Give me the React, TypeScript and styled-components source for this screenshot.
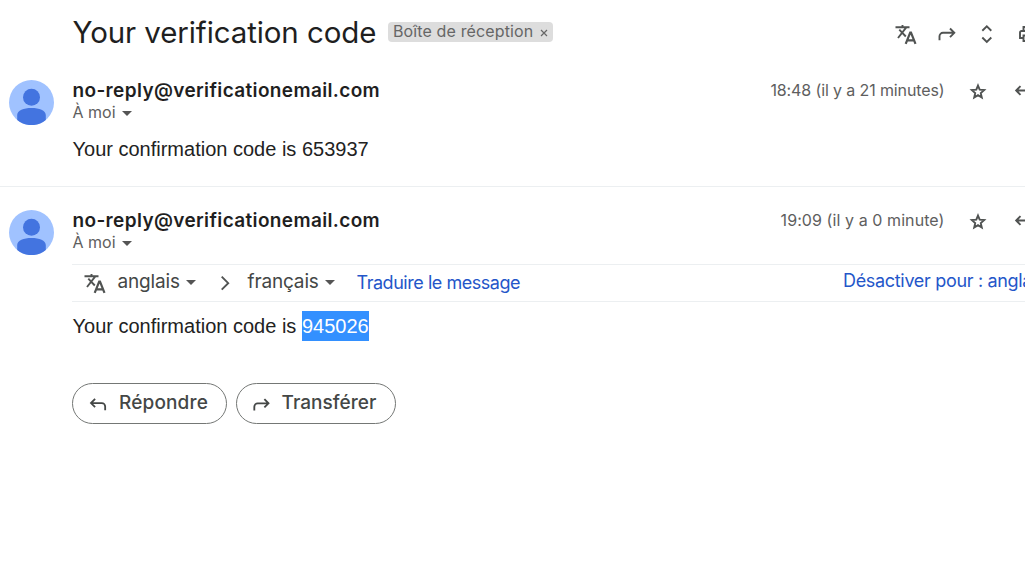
import React from "react";
import styled, { createGlobalStyle } from "styled-components";

const GlobalStyle = createGlobalStyle`
  * { box-sizing: border-box; }
  body { margin: 0; background: #fff; overflow: hidden; }
`;

const brand = `"Google Sans", Inter, Roboto, sans-serif`;

const Page = styled.main`
  width: 1025px;
  height: 568px;
  overflow: hidden;
  background: #fff;
  color: #1f1f1f;
  font-family: ${brand};
  white-space: nowrap;
`;

const Header = styled.header`
  display: flex;
  height: 80px;
  padding-left: 72.5px;
`;

const Subject = styled.h1`
  flex: none;
  width: 315.5px;
  margin: 12px 0 0;
  font-size: 29.5px;
  line-height: 40px;
  font-weight: 400;
  letter-spacing: -0.1px;
`;

const Chip = styled.span`
  display: flex;
  flex: none;
  width: 165px;
  height: 20px;
  margin-top: 22px;
  padding: 0 5px;
  border-radius: 4px;
  background: #ddd;
  color: #666;
  font-size: 16px;
  line-height: 19px;
  letter-spacing: 0.13px;
  justify-content: space-between;
`;

const ChipClose = styled.svg`
  width: 8px;
  height: 8px;
  margin-top: 7px;
`;

const Toolbar = styled.div`
  display: flex;
  flex: none;
  margin: 22px 0 0 341px;
  color: #505352;
`;

const ToolSlot = styled.span<{ $width: number }>`
  flex: none;
  width: ${(p) => p.$width}px;
`;

const IconBox = styled.svg<{ $size?: number }>`
  display: block;
  flex: none;
  width: ${(p) => p.$size ?? 24}px;
  height: ${(p) => p.$size ?? 24}px;
  fill: none;
  stroke: currentColor;
  stroke-width: 1.9;
`;

const Message = styled.article<{ $divided?: boolean }>`
  display: flex;
  height: ${(p) => (p.$divided ? "107px" : "300px")};
  border-bottom: ${(p) => (p.$divided ? "1px solid #eceff1" : "0")};
  padding-left: 9px;
  margin-bottom: 23px;
`;

const Avatar = styled.svg`
  display: block;
  flex: none;
  width: 45px;
  height: 45px;
  margin-right: 18px;
`;

const Content = styled.div`
  flex: none;
  width: 1100px;
`;

const MetaRow = styled.div`
  display: flex;
  height: 22px;
  padding-left: 0.5px;
`;

const Sender = styled.strong`
  width: 430px;
  font-size: 19px;
  line-height: 21px;
  font-weight: 600;
  letter-spacing: 0.36px;
`;

const Time = styled.span<{ $spacing: number }>`
  width: 442px;
  text-align: right;
  color: #5e5e5e;
  font-size: 16px;
  line-height: 21px;
  letter-spacing: ${(p) => p.$spacing}px;
`;

const MetaIcons = styled.div`
  display: flex;
  gap: 21px;
  padding-left: 21.5px;
  color: #505352;
`;

const Recipient = styled.div`
  display: flex;
  align-items: center;
  height: 21px;
  padding-left: 0.5px;
  gap: 6px;
  color: #5e5e5e;
  font-size: 16px;
  line-height: 21px;
`;

const Caret = styled.span`
  width: 0;
  height: 0;
  margin-top: 2px;
  border: 5px solid transparent;
  border-top-color: #555;
  border-bottom: 0;
`;

const Body = styled.p<{ $top: number }>`
  margin: ${(p) => p.$top}px 0 0;
  padding-left: 0.5px;
  color: #222;
  font-family: Arial, "Liberation Sans", sans-serif;
  font-size: 20px;
  line-height: 30px;
`;

const Selected = styled.mark`
  display: inline-block;
  height: 30px;
  background: #3390ff;
  color: #fff;
`;

const TranslateBar = styled.div`
  display: flex;
  height: 38px;
  margin-top: 11px;
  border-top: 1px solid #eceff1;
  border-bottom: 1px solid #eceff1;
  padding-left: 11px;
  color: #444746;
`;

const Language = styled.span<{ $width: number }>`
  display: flex;
  align-items: center;
  justify-content: space-between;
  flex: none;
  width: ${(p) => p.$width}px;
  height: 33px;
  font-size: 19px;
  letter-spacing: -0.15px;
`;

const BarIcon = styled.span<{ $width: number; $inset?: number }>`
  flex: none;
  width: ${(p) => p.$width}px;
  padding: 6px 0 0 ${(p) => p.$inset ?? 0}px;
  color: #505352;
`;

const Link = styled.a<{ $line: number; $spacing: number }>`
  flex: none;
  color: #2456c9;
  font-size: 18px;
  line-height: ${(p) => p.$line}px;
  letter-spacing: ${(p) => p.$spacing}px;
`;

const LinkSlot = styled.span`
  flex: none;
  width: 508.5px;
  padding-left: 22px;
`;

const Actions = styled.div`
  display: flex;
  gap: 9px;
  margin-top: 42px;
`;

const ActionButton = styled.button<{ $width: number; $gap: number; $spacing: number }>`
  display: flex;
  align-items: center;
  width: ${(p) => p.$width}px;
  height: 41px;
  padding: 0 0 2px 13px;
  gap: ${(p) => p.$gap}px;
  border: 1px solid #747775;
  border-radius: 21px;
  background: #fff;
  color: #444746;
  font: 500 19px ${brand};
  letter-spacing: ${(p) => p.$spacing}px;

  svg { margin-top: 4px; }
`;

const TranslateIcon = () => (
  <IconBox viewBox="0 0 24 24">
    <path d="M1.500 5.200H15.500M8.500 3v2.200M4 16 12.500 5.200M5.300 7.700l6.500 6.800" />
    <path strokeWidth="2.200" d="m11.700 21.800 4.500-11.200h.8l4.500 11.200M13.400 18.300h6.400" />
  </IconBox>
);

const ForwardIcon = ({ size = 24 }: { size?: number }) => (
  <IconBox $size={size} viewBox="0 0 24 24">
    <path d="M4.500 18.300v-4a3.500 3.500 0 0 1 3.500-3.500H19M15 6.500l4.300 4.300-4.300 4.300" />
  </IconBox>
);

const ReplyIcon = ({ size = 24 }: { size?: number }) => (
  <IconBox $size={size} viewBox="0 0 24 24">
    <path d="M20 18v-4a3.500 3.500 0 0 0-3.500-3.500H5M9.500 6.200 5.200 10.500l4.300 4.300" />
  </IconBox>
);

const UnfoldIcon = () => (
  <IconBox viewBox="0 0 24 24">
    <path d="m7.300 8.800 4.500-4.400 4.500 4.400M7.300 15.500l4.500 4.400 4.500-4.400" />
  </IconBox>
);

const PrintIcon = () => (
  <IconBox viewBox="0 0 24 24">
    <path d="M7.500 9V5h9v4M7.500 16H4v-5.500A1.500 1.500 0 0 1 5.500 9h13a1.500 1.500 0 0 1 1.500 1.500V16h-3.500M7.500 13.500h9V19h-9z" />
  </IconBox>
);

const StarIcon = () => (
  <IconBox viewBox="0 0 24 24">
    <path d="m12 5.600 1.700 4.100 4.500.4-3.400 3 1 4.400-3.800-2.300-3.800 2.300 1-4.400-3.400-3 4.500-.4z" />
  </IconBox>
);

const ChevronIcon = () => (
  <IconBox viewBox="0 0 24 24">
    <path d="m8.700 5.700 6.500 6.500-6.500 6.500" />
  </IconBox>
);

const UserAvatar = () => (
  <Avatar viewBox="0 0 45 45">
    <circle cx="22.5" cy="22.5" r="22.5" fill="#a0c2ff" />
    <circle cx="22.5" cy="17.3" r="8.5" fill="#4374e0" />
    <path
      d="M8.200 40v-5c0-4.500 6.500-7 14.300-7s14.300 2.500 14.300 7v5a22.500 22.500 0 0 1-28.600 0z"
      fill="#4374e0"
    />
  </Avatar>
);

function MessageHead({ time, spacing }: { time: string; spacing: number }) {
  return (
    <>
      <MetaRow>
        <Sender>no-reply@verificationemail.com</Sender>
        <Time $spacing={spacing}>{time}</Time>
        <MetaIcons>
          <StarIcon />
          <ReplyIcon />
        </MetaIcons>
      </MetaRow>
      <Recipient>
        <span>À moi</span>
        <Caret />
      </Recipient>
    </>
  );
}

export default function App() {
  return (
    <Page>
      <GlobalStyle />
      <Header>
        <Subject>Your verification code</Subject>
        <Chip>
          Boîte de réception
          <ChipClose viewBox="0 0 8 8" stroke="#666" strokeWidth="1.2">
            <path d="m1 1 6 6M7 1 1 7" />
          </ChipClose>
        </Chip>
        <Toolbar>
          <ToolSlot $width={41}><TranslateIcon /></ToolSlot>
          <ToolSlot $width={40}><ForwardIcon /></ToolSlot>
          <ToolSlot $width={41}><UnfoldIcon /></ToolSlot>
          <ToolSlot $width={41}><PrintIcon /></ToolSlot>
        </Toolbar>
      </Header>
      <Message $divided>
        <UserAvatar />
        <Content>
          <MessageHead time="18:48 (il y a 21 minutes)" spacing={-0.12} />
          <Body $top={11}>Your confirmation code is 653937</Body>
        </Content>
      </Message>
      <Message>
        <UserAvatar />
        <Content>
          <MessageHead time="19:09 (il y a 0 minute)" spacing={0.08} />
          <TranslateBar>
            <BarIcon $width={34.5}><TranslateIcon /></BarIcon>
            <Language $width={78.5}>anglais<Caret /></Language>
            <BarIcon $width={51.5} $inset={17}><ChevronIcon /></BarIcon>
            <Language $width={87}>français<Caret /></Language>
            <LinkSlot>
              <Link $line={36} $spacing={-0.46}>Traduire le message</Link>
            </LinkSlot>
            <Link $line={31} $spacing={-0.32}>Désactiver pour : anglais</Link>
          </TranslateBar>
          <Body $top={9}>
            Your confirmation code is <Selected>945026</Selected>
          </Body>
          <Actions>
            <ActionButton $width={155} $gap={10} $spacing={0.15}>
              <ReplyIcon size={23} />
              Répondre
            </ActionButton>
            <ActionButton $width={160} $gap={8.5} $spacing={0.05}>
              <ForwardIcon size={23} />
              Transférer
            </ActionButton>
          </Actions>
        </Content>
      </Message>
    </Page>
  );
}
